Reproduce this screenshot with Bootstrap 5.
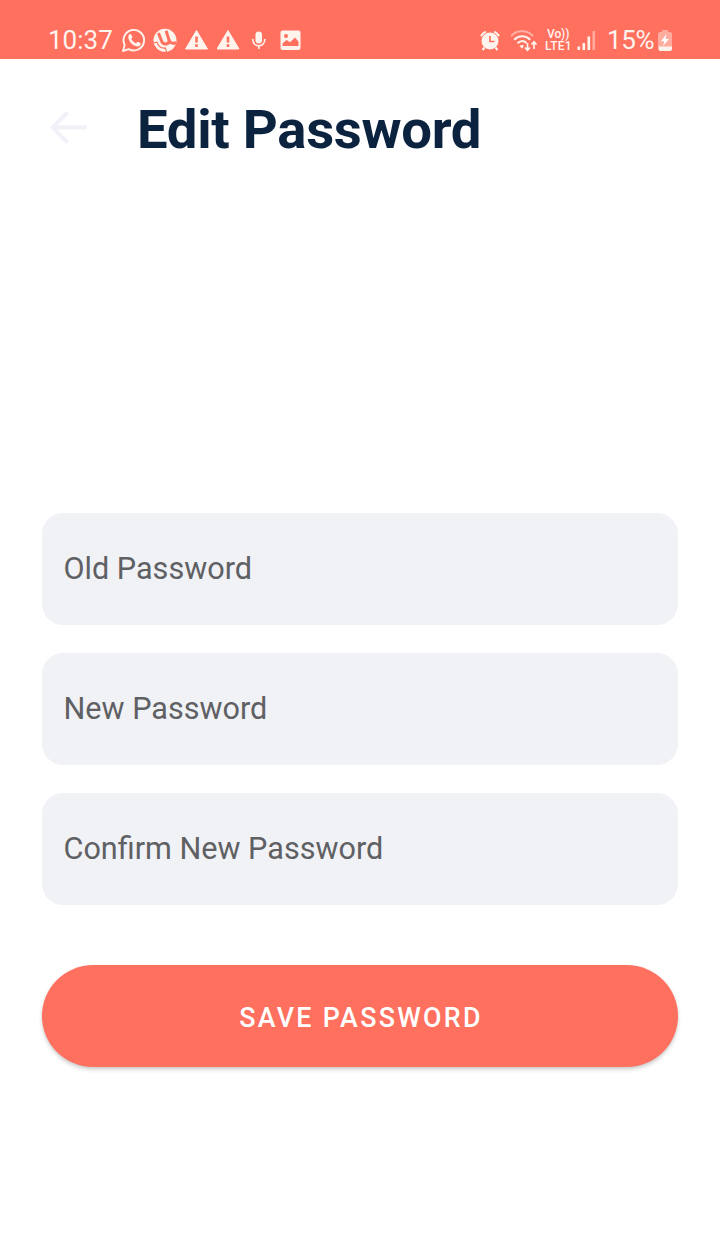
<!DOCTYPE html>
<html lang="en">
<head>
<meta charset="utf-8">
<meta name="viewport" content="width=device-width, initial-scale=1">
<title>Edit Password</title>
<link href="https://cdn.jsdelivr.net/npm/bootstrap@5.3.0/dist/css/bootstrap.min.css" rel="stylesheet">
<style>
body{font-family:Roboto,sans-serif;background:#fff;color:#0c2340;min-height:1233px}
.statusbar{height:58.5px;background:#ff705e;color:#fff3ee;padding:0 48px;line-height:1}
.statusbar svg{display:block;height:58px;flex:none}
.status-text{font-size:26px;padding-top:27px;height:58px;white-space:nowrap}
.clock{width:73px}
.percent{width:51px;letter-spacing:-.3px}
.carrier{width:32px;padding-top:29px;font-size:12px;font-weight:500;line-height:11.5px;white-space:nowrap}
.carrier div:first-child{padding-left:2px;letter-spacing:-.1px}
.carrier div:last-child{letter-spacing:.2px}
.titlebar{padding:40px 42px 0 50px;height:454.5px}
.title-text{font-size:54.5px;font-weight:700;line-height:60px;margin-left:50px;letter-spacing:-.3px;white-space:nowrap}
.back{width:37px;height:54px;color:#f1f2f7}
.fields{padding:0 42px;gap:28px}
.fields .form-control{height:112px;border:0;border-radius:21px;background:#f1f2f6;padding:0 21.5px 2px;font-size:30.6px;color:#5f6063}
.fields .form-control::placeholder{color:#5f6063;opacity:1}
.save-wrap{padding:59.5px 42px 0}
.btn-save{height:102.5px;background:#ff705e;color:#fff;font-size:26.8px;font-weight:500;letter-spacing:2.3px;border:0;box-shadow:0 3px 4px rgba(0,0,0,.14),0 1px 3px rgba(0,0,0,.1);padding:4px 0 0 2px}
</style>
</head>
<body>
<header class="statusbar d-flex justify-content-between">
  <div class="d-flex">
    <div class="status-text clock">10:37</div>
    <!-- chat -->
    <svg width="32" viewBox="121 0 32 58" fill="none" stroke="currentColor"><path d="M123 51l1.700-6a10.300 10.300 0 1 1 4.100 4.200z" stroke-width="1.900" stroke-linejoin="round"/><path fill="currentColor" stroke="none" d="M129 34.500c1-.9 2-.7 2.500.4l.9 2.200c.2.600-.9 1.500-1.100 2 1 2 2.600 3.300 4.600 4.100.6-.2 1.300-1.700 2-1.500l2.400 1.200c.8.400.2 2.200-.6 2.800-2 1.500-5 .5-7.700-1.800-2.600-2.300-4.900-6.400-3-9.400z"/></svg>
    <!-- torrent -->
    <svg width="32" viewBox="153 0 32 58" fill="none"><circle cx="165" cy="40.300" r="11.500" fill="currentColor"/><path d="M158.500 33l3 8c1.700 4.300 7.800 3.800 7.600-.8l-3-9.500M169.200 40c.7 2.800 3 4 7 2.800" stroke="#ff705e" stroke-width="3"/><path d="M153 43l4-.8c1.200 4.300 4.500 6.300 8.500 5.800l1 4.500" stroke="#ff705e" stroke-width="1.100"/></svg>
    <svg width="32" viewBox="185 0 32 58"><path fill="currentColor" stroke="currentColor" stroke-linejoin="round" d="M196.500 30.500L207.500 49h-22z"/><path stroke="#ff705e" stroke-width="2.600" d="M196.500 36.500v6M196.500 44.300v2.600"/></svg>
    <svg width="35" viewBox="217 0 35 58"><path fill="currentColor" stroke="currentColor" stroke-linejoin="round" d="M228 30.500L239 49h-22z"/><path stroke="#ff705e" stroke-width="2.600" d="M228 36.500v6M228 44.300v2.600"/></svg>
    <!-- microphone -->
    <svg width="28" viewBox="252 0 28 58" fill="none" stroke="currentColor"><rect x="255.500" y="31.500" width="6.500" height="12" rx="3.250" fill="currentColor" stroke="none"/><path d="M252.800 39c0 9 12 9 12 0M258.800 45.500v3.500" stroke-width="1.700"/></svg>
    <!-- picture -->
    <svg width="21" viewBox="280 0 21 58"><rect x="280.500" y="30.500" width="20" height="19.500" rx="2" fill="currentColor"/><circle cx="286" cy="36" r="2" fill="#ff705e"/><path d="M282.500 46v-2.500l4-3.500 3.500 2.200 5-4.700 3.500 4V46z" fill="#ff705e"/></svg>
  </div>
  <div class="d-flex">
    <!-- alarm -->
    <svg width="31" viewBox="480 0 31 58" fill="none" stroke="currentColor"><circle cx="490" cy="41" r="8.500" fill="currentColor" stroke="none"/><path d="M481 36.300a10 10 0 0 1 4.800-4.700M494.200 31.600a10 10 0 0 1 4.800 4.700M484.500 47.500l-2 2.500M495.500 47.500l2 2.500" stroke-width="2.100"/><path d="M490 36v5.500h4.500" stroke="#ff705e" stroke-width="1.700"/></svg>
    <!-- wifi -->
    <svg width="34" viewBox="511 0 34 58" fill="none" stroke="currentColor"><path d="M511 36c6-6.300 16-6.300 22 0" opacity=".5" stroke-width="1.900"/><path d="M514.200 39.700c4.500-4.600 11.500-4.600 16 0M517.500 43.300c3-2.800 6.500-2.800 9-.3" stroke-width="2"/><path fill="currentColor" stroke="none" d="M519.500 46c1.500-1.300 3.500-1.300 4.500-.5l-1.800 3.200z"/><path d="M527.500 43v7M525 47.500l2.500 2.700 2.500-2.700M534 49v-7M531.500 44.500l2.500-2.700 2.500 2.700" stroke-width="1.700"/></svg>
    <div class="carrier"><div>Vo))</div><div>LTE1</div></div>
    <!-- signal -->
    <svg width="30" viewBox="577 0 30 58" fill="currentColor"><path d="M577.500 46.500h2.600V50h-2.600zM582.500 43h2.600v7h-2.600zM587.500 36.500h2.600V50h-2.600z"/><path opacity=".45" d="M592.500 31h2.600v19h-2.600z"/></svg>
    <div class="status-text percent">15%</div>
    <!-- battery -->
    <svg width="14" viewBox="658 0 14 58" fill="currentColor"><path opacity=".45" d="M662 30h6v2h2q2 0 2 2v13h-14V34q0-2 2-2h2z"/><path d="M658.500 46.500h13.500V49q0 2-2 2h-9.500q-2 0-2-2z"/><path d="M666.500 34l-5.500 7.200h3.300L663 46l6-7h-3.500z" fill="#fff"/></svg>
  </div>
</header>
<main>
  <div class="titlebar d-flex align-items-start">
    <svg class="back flex-shrink-0" viewBox="0 0 37 54" fill="none" stroke="currentColor" stroke-width="4"><path d="M37 28.500H3M17.500 13.500l-15 15 15 15"/></svg>
    <h1 class="title-text mb-0">Edit Password</h1>
  </div>
  <form>
    <div class="fields d-flex flex-column">
      <input type="text" class="form-control" placeholder="Old Password" aria-label="Old Password">
      <input type="text" class="form-control" placeholder="New Password" aria-label="New Password">
      <input type="text" class="form-control" placeholder="Confirm New Password" aria-label="Confirm New Password">
    </div>
    <div class="save-wrap">
      <button type="button" class="btn btn-save rounded-pill w-100">SAVE PASSWORD</button>
    </div>
  </form>
</main>
<script src="https://cdn.jsdelivr.net/npm/bootstrap@5.3.0/dist/js/bootstrap.bundle.min.js"></script>
</body>
</html>
